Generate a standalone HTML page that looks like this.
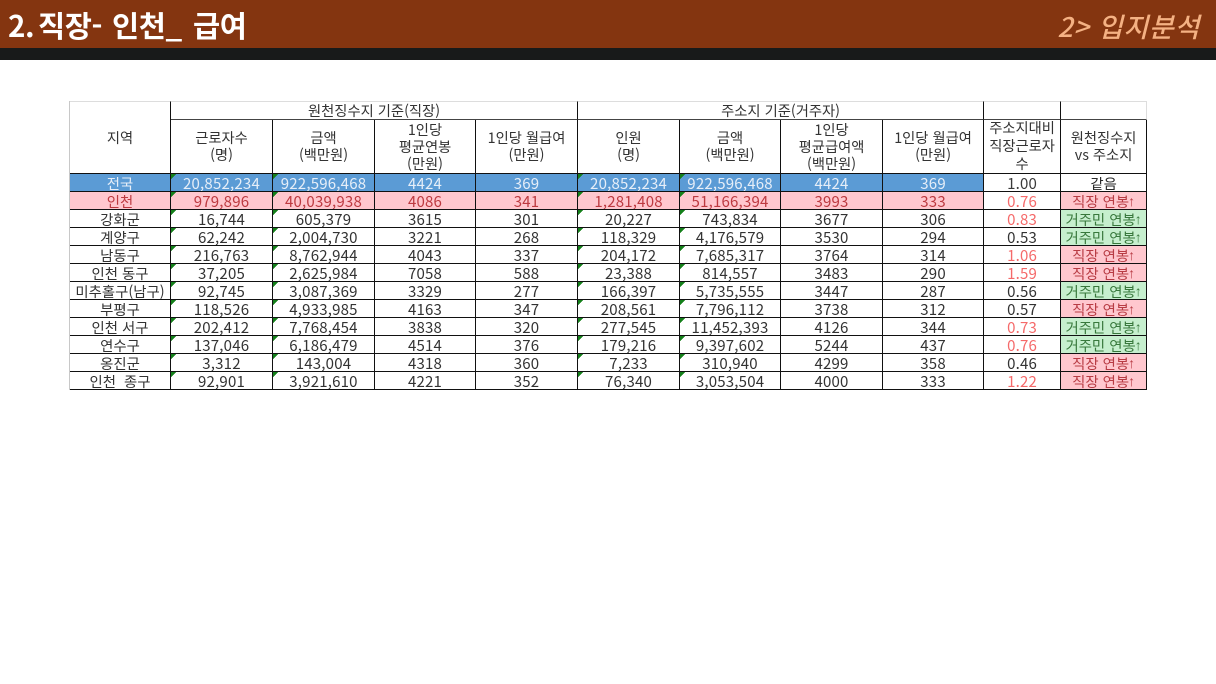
<!DOCTYPE html>
<html lang="ko"><head><meta charset="utf-8"><title>직장 인천 급여</title>
<style>
html,body{margin:0;padding:0;background:#fff;width:1216px;height:684px;overflow:hidden}
body{position:relative;font-family:"Liberation Sans","Noto Sans CJK KR",sans-serif}
#bar{position:absolute;left:0;top:0;width:1216px;height:48px;background:#843510}
#blk{position:absolute;left:0;top:48px;width:1216px;height:12px;background:#181a1a}
#t1{position:absolute;left:8px;top:5px;font:700 29.5px/40px "Noto Sans CJK KR",sans-serif;color:#fff;white-space:pre;letter-spacing:-.4px}
#t1 span{position:absolute;top:0}
#t2{position:absolute;right:16px;top:6px;font:italic 500 27px/40px "Noto Sans CJK KR",sans-serif;color:#f4b183;white-space:pre;letter-spacing:.7px}
table{position:absolute;left:69px;top:101px;border-collapse:separate;border-spacing:0;table-layout:fixed;width:1077px;font-family:"Noto Sans CJK KR",sans-serif;font-size:14.3px;color:#333;border-left:1px solid #c8c8c8;filter:blur(.25px)}
td{padding:0;border-right:1px solid #111;border-bottom:1px solid #111;text-align:center;vertical-align:middle;overflow:hidden;white-space:nowrap;line-height:17px;box-sizing:border-box}
tr.g td{border-top:1px solid #ddd;height:19px;line-height:16px}
tr.g td.n{border-bottom-color:#444}
tr.h td{height:54px;padding-bottom:1px}
tr.h td.w div{line-height:18px;margin:-2px 0}
tr.r td{height:18px;line-height:15px;font-size:15px;letter-spacing:.2px;padding-top:2px}
tr.r td.k{font-size:14.4px;letter-spacing:0}
tr.r td.c{font-size:14.4px;letter-spacing:0}
tr.r td.v{background-image:linear-gradient(135deg,#14801a 3.6px,transparent 3.8px);background-repeat:no-repeat;background-position:0 0;background-size:7px 7px}
tr.b td{background-color:#5b9bd5;color:#e6eef8}
tr.p td{background-color:#ffc7ce;color:#bd3a40}
tr.r td.x{background-color:#fff;color:#3a3a3a}
tr.r td.e{color:#f56a6a}
td.u{background-color:#ffc7ce!important;color:#b83c44!important}
td.f{background-color:#c6efce!important;color:#38783c!important}
td.s{background-color:#fff!important;color:#2a2a2a!important}
i{font:normal 14px/0 "Liberation Sans",sans-serif;vertical-align:1px;display:inline;margin-left:-1px}
</style></head><body>
<div id="bar"></div><div id="blk"></div>
<div id="t1">2.<span style="left:30px">직장-</span><span style="left:104px">인천_</span><span style="left:185px">급여</span></div>
<div id="t2">2&gt; 입지분석</div>
<table>
<colgroup><col style="width:101px"><col style="width:102px"><col style="width:102px"><col style="width:101px"><col style="width:102px"><col style="width:102px"><col style="width:101px"><col style="width:102px"><col style="width:101px"><col style="width:77px"><col style="width:86px"></colgroup>
<tr class="g"><td rowspan="2" style="height:73px">지역</td><td colspan="4" class="n">원천징수지 기준(직장)</td><td colspan="4" class="n">주소지 기준(거주자)</td><td class="n"></td><td class="n" style="border-right-color:#ddd"></td></tr>
<tr class="h"><td>근로자수<br>(명)</td><td>금액<br>(백만원)</td><td>1인당<br>평균연봉<br>(만원)</td><td style="padding-bottom:2px">1인당 월급여<br>(만원)</td><td>인원<br>(명)</td><td>금액<br>(백만원)</td><td>1인당<br>평균급여액<br>(백만원)</td><td style="padding-bottom:2px">1인당 월급여<br>(만원)</td><td class="w"><div>주소지대비<br>직장근로자<br>수</div></td><td>원천징수지<br>vs 주소지</td></tr>
<tr class="r b"><td class="k">전국</td><td class="v">20,852,234</td><td class="v">922,596,468</td><td>4424</td><td>369</td><td class="v">20,852,234</td><td class="v">922,596,468</td><td>4424</td><td>369</td><td class="x">1.00</td><td class="c s">같음</td></tr>
<tr class="r p"><td class="k">인천</td><td class="v">979,896</td><td class="v">40,039,938</td><td>4086</td><td>341</td><td class="v">1,281,408</td><td class="v">51,166,394</td><td>3993</td><td>333</td><td class="x e">0.76</td><td class="c u">직장 연봉<i>↑</i></td></tr>
<tr class="r"><td class="k">강화군</td><td class="v">16,744</td><td class="v">605,379</td><td>3615</td><td>301</td><td class="v">20,227</td><td class="v">743,834</td><td>3677</td><td>306</td><td class="e">0.83</td><td class="c f">거주민 연봉<i>↑</i></td></tr>
<tr class="r"><td class="k">계양구</td><td class="v">62,242</td><td class="v">2,004,730</td><td>3221</td><td>268</td><td class="v">118,329</td><td class="v">4,176,579</td><td>3530</td><td>294</td><td>0.53</td><td class="c f">거주민 연봉<i>↑</i></td></tr>
<tr class="r"><td class="k">남동구</td><td class="v">216,763</td><td class="v">8,762,944</td><td>4043</td><td>337</td><td class="v">204,172</td><td class="v">7,685,317</td><td>3764</td><td>314</td><td class="e">1.06</td><td class="c u">직장 연봉<i>↑</i></td></tr>
<tr class="r"><td class="k">인천 동구</td><td class="v">37,205</td><td class="v">2,625,984</td><td>7058</td><td>588</td><td class="v">23,388</td><td class="v">814,557</td><td>3483</td><td>290</td><td class="e">1.59</td><td class="c u">직장 연봉<i>↑</i></td></tr>
<tr class="r"><td class="k">미추홀구(남구)</td><td class="v">92,745</td><td class="v">3,087,369</td><td>3329</td><td>277</td><td class="v">166,397</td><td class="v">5,735,555</td><td>3447</td><td>287</td><td>0.56</td><td class="c f">거주민 연봉<i>↑</i></td></tr>
<tr class="r"><td class="k">부평구</td><td class="v">118,526</td><td class="v">4,933,985</td><td>4163</td><td>347</td><td class="v">208,561</td><td class="v">7,796,112</td><td>3738</td><td>312</td><td>0.57</td><td class="c u">직장 연봉<i>↑</i></td></tr>
<tr class="r"><td class="k">인천 서구</td><td class="v">202,412</td><td class="v">7,768,454</td><td>3838</td><td>320</td><td class="v">277,545</td><td class="v">11,452,393</td><td>4126</td><td>344</td><td class="e">0.73</td><td class="c f">거주민 연봉<i>↑</i></td></tr>
<tr class="r"><td class="k">연수구</td><td class="v">137,046</td><td class="v">6,186,479</td><td>4514</td><td>376</td><td class="v">179,216</td><td class="v">9,397,602</td><td>5244</td><td>437</td><td class="e">0.76</td><td class="c f">거주민 연봉<i>↑</i></td></tr>
<tr class="r"><td class="k">옹진군</td><td class="v">3,312</td><td class="v">143,004</td><td>4318</td><td>360</td><td class="v">7,233</td><td class="v">310,940</td><td>4299</td><td>358</td><td>0.46</td><td class="c u">직장 연봉<i>↑</i></td></tr>
<tr class="r"><td class="k">인천&nbsp; 종구</td><td class="v">92,901</td><td class="v">3,921,610</td><td>4221</td><td>352</td><td class="v">76,340</td><td class="v">3,053,504</td><td>4000</td><td>333</td><td class="e">1.22</td><td class="c u">직장 연봉<i>↑</i></td></tr>
</table>
</body></html>
